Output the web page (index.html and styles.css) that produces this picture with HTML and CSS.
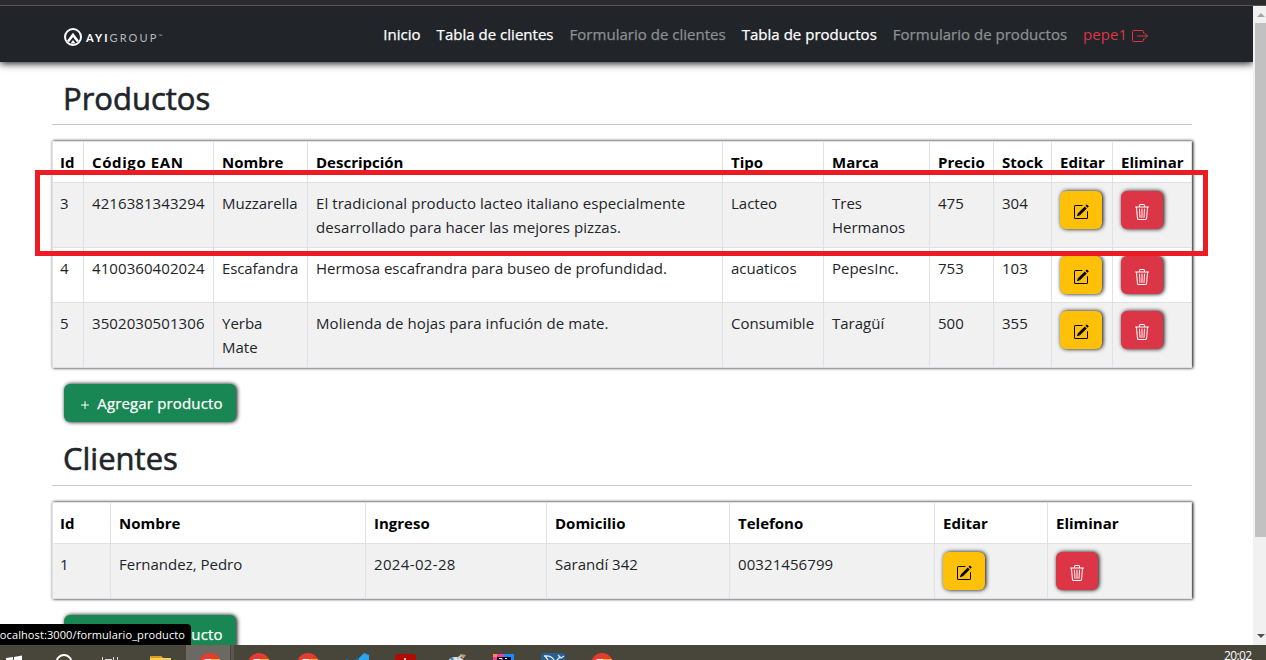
FILE: index.html
```html
<!DOCTYPE html>
<html lang="es">
<head>
<meta charset="utf-8">
<title>Productos</title>
<link rel="stylesheet" href="styles.css">
</head>
<body>
<svg class="sprite" aria-hidden="true">
  <symbol id="edit" viewBox="0 0 16 16"><path d="M15.502 1.94a.5.5 0 0 1 0 .706L14.459 3.69l-2-2L13.502.646a.5.5 0 0 1 .707 0l1.293 1.293zm-1.75 2.456-2-2L4.939 9.21a.5.5 0 0 0-.121.196l-.805 2.414a.25.25 0 0 0 .316.316l2.414-.805a.5.5 0 0 0 .196-.12l6.813-6.814z"/><path fill-rule="evenodd" d="M1 13.5A1.5 1.5 0 0 0 2.500 15h11a1.500 1.500 0 0 0 1.500-1.500v-6a.5.5 0 0 0-1 0v6a.5.5 0 0 1-.5.5h-11a.5.5 0 0 1-.5-.5v-11a.5.5 0 0 1 .5-.5H9a.5.5 0 0 0 0-1H2.500A1.500 1.500 0 0 0 1 2.500v11z"/></symbol>
  <symbol id="trash" viewBox="0 0 16 16"><path d="M6.500 1h3a.5.5 0 0 1 .5.5v1H6v-1a.5.5 0 0 1 .5-.5ZM11 2.500v-1A1.500 1.500 0 0 0 9.500 0h-3A1.500 1.500 0 0 0 5 1.500v1H2.506a.58.58 0 0 0-.01 0H1.500a.5.5 0 0 0 0 1h.538l.853 10.660A2 2 0 0 0 4.885 16h6.230a2 2 0 0 0 1.994-1.840l.853-10.660h.538a.5.5 0 0 0 0-1h-.995a.59.59 0 0 0-.01 0H11Zm1.958 1-.846 10.580a1 1 0 0 1-.997.920h-6.230a1 1 0 0 1-.997-.920L3.042 3.500h9.916Zm-7.487 1a.5.5 0 0 1 .528.470l.5 8.500a.5.5 0 0 1-.998.060L5 5.030a.5.5 0 0 1 .470-.530Zm5.058 0a.5.5 0 0 1 .470.530l-.5 8.500a.5.5 0 1 1-.998-.060l.5-8.500a.5.5 0 0 1 .528-.470ZM8 4.500a.5.5 0 0 1 .5.5v8.500a.5.5 0 0 1-1 0V5a.5.5 0 0 1 .5-.5Z"/></symbol>
  <symbol id="plus" viewBox="0 0 16 16"><path d="M8 4a.5.5 0 0 1 .5.5v3h3a.5.5 0 0 1 0 1h-3v3a.5.5 0 0 1-1 0v-3h-3a.5.5 0 0 1 0-1h3v-3A.5.5 0 0 1 8 4z"/></symbol>
  <symbol id="chrome" viewBox="0 0 24 10"><circle cx="12" cy="12" r="11" fill="#e63b2e"/><path d="M12 7h9.500q1.500 2 1.500 5H12z" fill="#fbc02d"/><path d="M6.500 10V7H13v3z" fill="#fff"/></symbol>
</svg>
<div class="browser-edge"></div>
<div class="window">
  <div class="page">
    <header class="navbar">
      <div class="brand">
        <svg width="18" height="18" viewBox="0 0 18 18"><circle cx="9" cy="9" r="8" fill="none" stroke="#fff" stroke-width="2"/><path d="M4 13.500 9 7l5 6.500" fill="none" stroke="#fff" stroke-width="2.600"/><path d="M6.500 15.500 9 12l2.500 3.500z" fill="#fff"/></svg>
        <span class="brand-text"><b>AYI</b>GROUP<small>™</small></span>
      </div>
      <nav class="nav">
        <a>Inicio</a><a>Tabla de clientes</a><a class="muted">Formulario de clientes</a><a>Tabla de productos</a><a class="muted wide">Formulario de productos</a>
        <a class="user">pepe1 <svg width="16" height="16" viewBox="0 0 16 16" fill="none" stroke="currentColor" stroke-linecap="round" stroke-linejoin="round"><path d="M11.500 5V3.500q0-1-1-1h-9q-1 0-1 1v9q0 1 1 1h9q1 0 1-1V11M5.500 8h10M12.500 5l3 3-3 3"/></svg></a>
      </nav>
    </header>
    <main class="content">
      <h2 class="title first">Productos</h2>
      <table class="grid">
        <colgroup><col class="p-id"><col class="p-ean"><col class="p-name"><col class="p-desc"><col class="p-type"><col class="p-brand"><col class="p-price"><col class="p-stock"><col class="p-edit"><col class="p-del"></colgroup>
        <thead><tr><th>Id</th><th class="ean">Código EAN</th><th>Nombre</th><th>Descripción</th><th>Tipo</th><th>Marca</th><th>Precio</th><th>Stock</th><th>Editar</th><th>Eliminar</th></tr></thead>
        <tbody>
          <tr class="tall"><td>3</td><td class="num">4216381343294</td><td>Muzzarella</td><td class="desc">El tradicional producto lacteo italiano especialmente<br>desarrollado para hacer las mejores pizzas.</td><td>Lacteo</td><td>Tres<br>Hermanos</td><td>475</td><td>304</td><td><button class="btn edit"><svg><use href="#edit"/></svg></button></td><td><button class="btn del"><svg><use href="#trash"/></svg></button></td></tr>
          <tr><td>4</td><td class="num">4100360402024</td><td class="tight">Escafandra</td><td>Hermosa escafrandra para buseo de profundidad.</td><td>acuaticos</td><td>PepesInc.</td><td>753</td><td>103</td><td><button class="btn edit"><svg><use href="#edit"/></svg></button></td><td><button class="btn del"><svg><use href="#trash"/></svg></button></td></tr>
          <tr class="tall"><td>5</td><td class="num">3502030501306</td><td>Yerba<br>Mate</td><td class="desc">Molienda de hojas para infución de mate.</td><td>Consumible</td><td>Taragüí</td><td>500</td><td>355</td><td><button class="btn edit"><svg><use href="#edit"/></svg></button></td><td><button class="btn del"><svg><use href="#trash"/></svg></button></td></tr>
        </tbody>
      </table>
      <button class="btn add"><svg><use href="#plus"/></svg><span>Agregar producto</span></button>
      <h2 class="title">Clientes</h2>
      <table class="grid">
        <colgroup><col class="c-id"><col class="c-name"><col class="c-date"><col class="c-home"><col class="c-tel"><col class="c-edit"><col class="c-del"></colgroup>
        <thead><tr><th>Id</th><th>Nombre</th><th>Ingreso</th><th>Domicilio</th><th>Telefono</th><th>Editar</th><th>Eliminar</th></tr></thead>
        <tbody>
          <tr><td>1</td><td>Fernandez, Pedro</td><td class="date">2024-02-28</td><td>Sarandí 342</td><td class="num">00321456799</td><td><button class="btn edit"><svg><use href="#edit"/></svg></button></td><td><button class="btn del"><svg><use href="#trash"/></svg></button></td></tr>
        </tbody>
      </table>
      <button class="btn add"><svg><use href="#plus"/></svg><span>Agregar producto</span></button>
    </main>
    <div class="highlight"></div>
    <div class="status"><span>localhost:3000/formulario_producto</span></div>
  </div>
  <div class="scrollbar"><i class="up"></i><div class="thumb"></div><i class="down"></i></div>
</div>
<footer class="taskbar">
  <svg width="1200" height="15" viewBox="0 0 1200 15">
    <path d="M186 0h44v15h-44z" fill="#6b6961"/><path d="M231 0h3v15h-3z" fill="#5a584e"/>
    <path d="M6 13l7-1v3H6zM14 12l8-1.500V15h-8z" fill="#fff"/>
    <circle cx="64" cy="17.500" r="7.500" fill="none" stroke="#fff" stroke-width="2"/>
    <path d="M102.500 12v3M105 14.500h7M113.500 12v3M117.500 12v3" stroke="#ddd" fill="none"/>
    <path d="M150 11h11l2 2h8v2h-21z" fill="#f9cf60"/><path d="M150 11h11l1 2h-12z" fill="#e39b13"/>
    <use href="#chrome" x="198" y="7" width="24" height="10"/><use href="#chrome" x="247" y="7" width="24" height="10"/><use href="#chrome" x="296" y="7" width="24" height="10"/><use href="#chrome" x="590" y="7" width="24" height="10"/>
    <path d="M354 15l9-4 0 4zM345 15l2-1 2 1z" fill="#0877bd"/><path d="M359 13l5-5 5 2v5h-10z" fill="#29a4ee"/>
    <rect x="395" y="9" width="21" height="10" rx="3" fill="#b30b00"/><path d="M405 15v-2" stroke="#fff" stroke-width="1.500"/>
    <ellipse cx="456" cy="17" rx="8" ry="5" fill="#d7e6ef"/><path d="M457 14l5-4" stroke="#c3cbd0" stroke-width="2"/><path d="M460 9l6 1-3 4z" fill="#c79a6a"/><circle cx="452" cy="14" r="1.500" fill="#348cc8"/>
    <path d="M493 9h11v6h-11z" fill="#ef3ba0"/><path d="M493 9h4v3h-4z" fill="#fa8b3c"/><path d="M504 9h10v6h-10z" fill="#168df5"/><path d="M497 12h14v3h-14z" fill="#080010"/><path d="M499 13.500h3v1.500M505 13.500h2" stroke="#fff" fill="none"/>
    <rect x="541" y="8" width="24" height="12" rx="3" fill="#28608f"/><path d="M544 11q7-1 10 4M545 11l3 4M558 10l3 3 3-2M560 12l-3 3" fill="none" stroke="#dce9f2" stroke-width="1.300"/>
  </svg>
  <span class="clock">20:02</span>
</footer>
</body>
</html>
```
FILE: styles.css
```css
* { box-sizing: border-box; }
body { margin: 0; width: 1266px; height: 660px; overflow: hidden; display: flex; flex-direction: column; background: #fff; color: #212529; font: 15px/24px "Open Sans", "Noto Sans", sans-serif; }
.sprite { position: absolute; width: 0; height: 0; }
.browser-edge { flex: none; height: 6px; background: #2b2b2b; border-bottom: 1px solid #50555a; }
.window { flex: none; display: flex; height: 639px; overflow: hidden; }
.page { position: relative; width: 1253px; overflow: hidden; }
.navbar { height: 56px; padding: 0 105px 0 64px; display: flex; align-items: center; justify-content: space-between; background: #212529; box-shadow: 0 1px 8px #000; }
.brand { display: flex; align-items: center; gap: 4px; padding-top: 5px; color: #fff; }
.brand-text { font: 11px/18px Lato, sans-serif; letter-spacing: 2.1px; color: #b5b7b9; white-space: nowrap; }
.brand-text b { color: #fff; }
.brand-text small { font-size: 5px; vertical-align: 4px; letter-spacing: 0; }
.nav { display: flex; gap: 16px; color: #fff; white-space: nowrap; letter-spacing: .02px; -webkit-text-stroke: .25px currentColor; }
.nav .muted { color: #8d8f91; }
.nav .user { display: flex; align-items: center; gap: 5px; color: #dc3545; -webkit-text-stroke: 0; }
.nav .user svg { margin-top: 3px; }
.content { padding-left: 52px; width: 1192px; }
.title { margin: 0; height: 64px; padding: 17px 11px 0; border-bottom: 1px solid #c8c9ca; font-size: 31px; line-height: 38px; font-weight: 500; -webkit-text-stroke: .6px currentColor; }
.title.first { height: 63px; }
.title + .grid { margin-top: 16px; }
.grid { width: 1140px; table-layout: fixed; border-spacing: 0; border: solid #dee2e6; border-width: 0 1px 1px 0; box-shadow: 1px 0 3px #000; }
.grid th, .grid td { height: 55px; padding: 8px 0 0 8px; border: solid #dee2e6; border-width: 1px 0 0 1px; text-align: left; vertical-align: top; white-space: nowrap; }
.grid th { height: 41px; color: #000; font-weight: 700; background: #fff; }
.grid th:first-child, .grid td:first-child { padding-left: 7px; }
.grid .tall td { height: 65px; }
.grid tbody tr:nth-child(odd) td { background: #f1f1f1; }
.grid .num { letter-spacing: .08px; }
.grid .date { letter-spacing: .35px; }
.grid .desc { letter-spacing: .075px; }
.grid .tight { letter-spacing: -.1px; }
.grid .ean { letter-spacing: .6px; }
.p-id { width: 31px; } .p-ean { width: 130px; } .p-name { width: 94px; } .p-desc { width: 415px; } .p-type { width: 101px; }
.p-brand { width: 106px; } .p-price { width: 64px; } .p-stock { width: 58px; } .p-edit { width: 61px; } .p-del { width: 79px; }
.c-id { width: 58px; } .c-name { width: 255px; } .c-date { width: 181px; } .c-home { width: 183px; } .c-tel { width: 205px; } .c-edit { width: 113px; } .c-del { width: 144px; }
.btn { display: flex; align-items: center; justify-content: center; width: 42px; height: 38px; margin: 0; padding: 4px 0 0; border: 0; border-radius: 6px; box-shadow: 1px 0 4px #000; font: inherit; }
.btn svg { width: 16px; height: 16px; fill: currentColor; }
.edit { background: #ffc107; color: #000; }
.del { background: #dc3545; color: #fff; }
.add { width: 172px; margin: 16px 0 0 12px; padding: 0; gap: 4px; background: #198754; color: #fff; white-space: nowrap; letter-spacing: .16px; -webkit-text-stroke: .25px currentColor; }
.add svg { margin-top: 3px; }
.highlight { position: absolute; left: 35px; top: 164px; width: 1173px; height: 86px; border: 5px solid #ed1c24; }
.status { position: absolute; left: 0; bottom: 0; width: 191px; height: 21px; padding-right: 6px; display: flex; justify-content: flex-end; overflow: hidden; border-top-right-radius: 4px; background: #000; color: #fff; font-size: 11px; letter-spacing: .1px; line-height: 21px; white-space: nowrap; }
.scrollbar { width: 13px; padding-left: 2px; background: #f1f1f1; display: flex; flex-direction: column; align-items: center; }
.thumb { width: 11px; height: 514px; margin-top: 6px; background: #c1c1c1; }
.up, .down { border: solid transparent; border-width: 0 4px 4px; border-bottom-color: #a3a3a3; margin-top: 7px; }
.down { border-width: 4px 4px 0; border-top-color: #505050; margin: 97px 0 0; }
.taskbar { flex: none; height: 15px; display: flex; background: #48463a; overflow: hidden; }
.clock { margin-left: 24px; font-size: 12px; line-height: 21px; color: #fff; letter-spacing: -.6px; }
```
